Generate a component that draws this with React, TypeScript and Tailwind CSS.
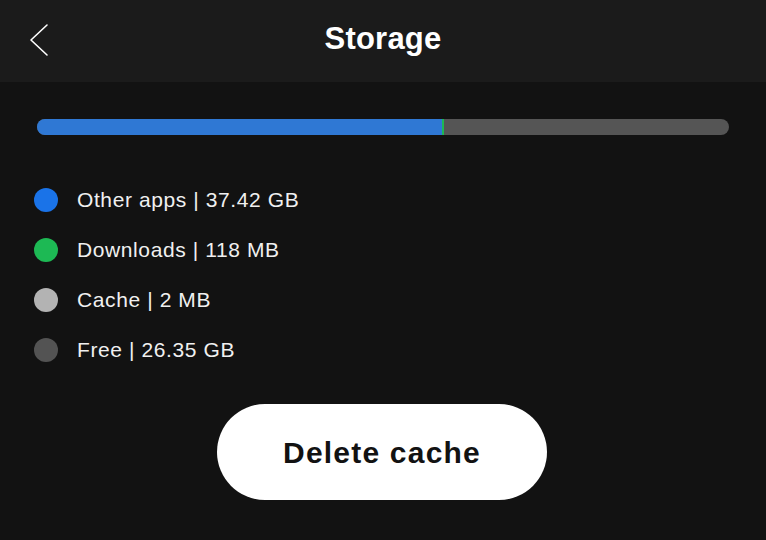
type Item = {
  label: string
  color: string
}

const items: Item[] = [
  { label: "Other apps | 37.42 GB", color: "bg-[#1a73e8]" },
  { label: "Downloads | 118 MB", color: "bg-[#1db954]" },
  { label: "Cache | 2 MB", color: "bg-[#b3b3b3]" },
  { label: "Free | 26.35 GB", color: "bg-[#535353]" },
]

export default function App() {
  return (
    <div className="w-[766px] h-[540px] bg-[#121212] text-white font-['Liberation_Sans',_Arial,_sans-serif] overflow-hidden">
      <header className="relative h-[82px] bg-[#1b1b1b] flex items-center justify-center">
        <svg className="absolute left-[27px] top-[23px]" width="22" height="34" viewBox="0 0 22 34" fill="none">
          <polyline points="20,2 4,17 20,32" stroke="white" strokeWidth="1.6" strokeLinecap="round" strokeLinejoin="round" />
        </svg>
        <h1 className="text-[31px] font-bold tracking-[0.2px] -mt-[3px]">Storage</h1>
      </header>

      <div className="px-[37px] pt-[37px]">
        <div className="flex h-[16px] w-[692px] rounded-full overflow-hidden bg-[#555555]">
          <div className="w-[405px] bg-[#2f78d4]" />
          <div className="w-[2px] bg-[#1db954]" />
        </div>
      </div>

      <ul className="pl-[34px] pt-[53px] flex flex-col gap-[26px]">
        {items.map((item) => (
          <li key={item.label} className="flex items-center h-[24px]">
            <span className={`w-[24px] h-[24px] rounded-full ${item.color}`} />
            <span className="ml-[19px] text-[21px] tracking-[0.6px] text-[#f0f0f0]">{item.label}</span>
          </li>
        ))}
      </ul>

      <div className="flex justify-center pt-[42px] pr-[2px]">
        <button className="w-[330px] h-[96px] rounded-full bg-white text-[#121212] text-[30px] font-bold tracking-[1.2px]">
          Delete cache
        </button>
      </div>
    </div>
  )
}
